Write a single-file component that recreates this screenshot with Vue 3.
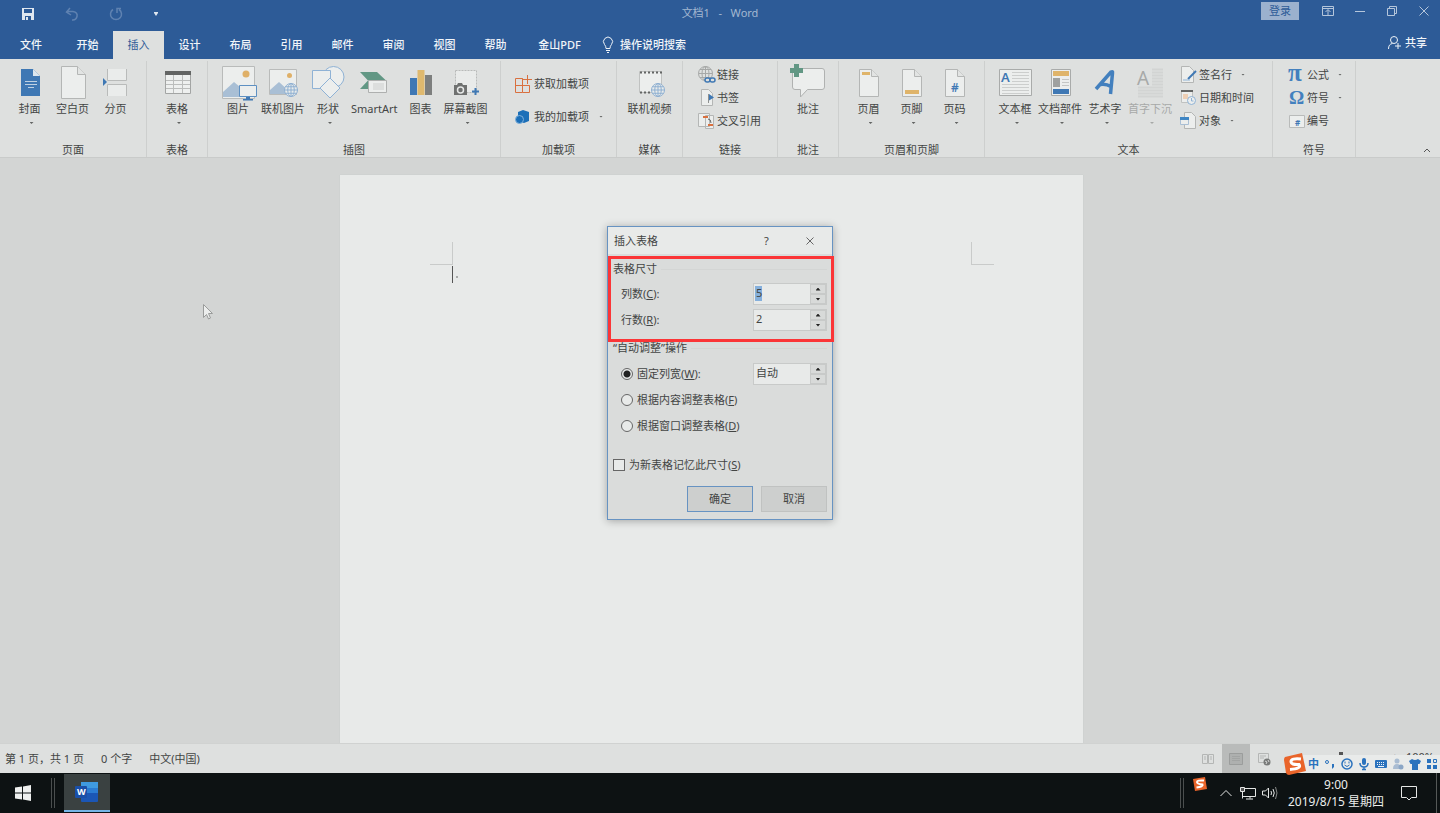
<script setup>
import { ref } from 'vue'

const tabs = ['开始', '插入', '设计', '布局', '引用', '邮件', '审阅', '视图', '帮助']
const activeTab = ref('插入')

const globe = (x, y, r) => {
  const h = r / 2
  return `<g fill="#e9eceb" stroke="#8fb0d2"><circle cx="${x}" cy="${y}" r="${r}"/><ellipse cx="${x}" cy="${y}" rx="${h}" ry="${r}" fill="none"/><path fill="none" d="M${x - r} ${y}h${2 * r}M${x} ${y - r}v${2 * r}M${x - r + 1} ${y - h}h${2 * r - 2}M${x - r + 1} ${y + h}h${2 * r - 2}"/></g>`
}
const sheet = '<path d="M12.500 4.500h12l7 7v20h-19z" fill="#eceeed" stroke="#b4b6b5"/><path d="M24.500 4.500v7h7" fill="#e2e4e3" stroke="#b4b6b5"/>'

const icons = {
  cover: '<path d="M13 4h12l7 7v20H13z" fill="#3f78b4"/><path d="M25 4v7h7z" fill="#dce6ee"/><path d="M17 16.500h12M17 19.500h12M20 22.500h6" stroke="#bfd1e3"/>',
  blank: '<path d="M10.500 1.500h16l8 8v24h-24z" fill="#eceeed" stroke="#b4b6b5"/><path d="M26.500 1.500v8h8" fill="#e2e4e3" stroke="#b4b6b5"/>',
  break: '<path d="M13.500 4v11.500h19V4M13.500 31V19.500h19V31" fill="#eaeceb" stroke="#b9bbba"/><path d="M9 13l4 4-4 4z" fill="#3f78b4"/>',
  table: '<path d="M10.500 6.500h25v22h-25z" fill="#eef0ef" stroke="#a3a5a4"/><path d="M10 6h26v4H10z" fill="#636564"/><path d="M18.500 10v18M27.500 10v18M11 15.500h24M11 19.500h24M11 23.500h24" stroke="#bbbdbc"/>',
  picture: '<path d="M6.500 1.500h32v32h-32z" fill="#eceeed" stroke="#b9bbba"/><circle cx="30" cy="9" r="3.500" fill="#dfb068"/><path d="M7 32V27l11-10 12 10v5z" fill="#a9bfd5"/><path d="M23.500 20.500h17v11h-17z" fill="#eceeed" stroke="#5e90c2"/><path d="M30 32h4v2h3v1.500H27V34h3z" fill="#3f78b4"/>',
  online: '<path d="M8.500 4.500h27v25h-27z" fill="#eceeed" stroke="#b9bbba"/><circle cx="28.500" cy="10.500" r="2.500" fill="#dfb068"/><path d="M9 29v-4l9-8 10 9v3z" fill="#a9bfd5"/>' + globe(30, 25, 6.5),
  shapes: '<g fill="#eceeed" stroke="#8fb2d5"><circle cx="27.500" cy="12" r="10.500"/><path d="M6.500 5.500h18v18h-18z"/><path d="M24 13l10 10-10 10-10-10z"/></g>',
  smart: '<path d="M8 7h17l9 8.500-9 8.500H8l8-8.500z" fill="#629784"/><path d="M16.500 15.500h18v12h-18z" fill="#eceeed" stroke="#aeb0af"/><path d="M21 18h11v7H21z" fill="#dcdedd"/>',
  chart: '<path d="M11 13h7v17h-7z" fill="#3f78b4"/><path d="M18.500 5h7v25h-7z" fill="#dfb96e"/><path d="M26 10h7v20h-7z" fill="#7d7f7e"/>',
  shot: '<path d="M11.500 5.500h21v22h-21z" fill="#e9ebea" stroke="#b8bab9" stroke-dasharray="2 1"/><path d="M10 20h3l1-2h4l1 2h4v10H10z" fill="#6f7170"/><circle cx="16.500" cy="25" r="3" fill="none" stroke="#e6e8e7" stroke-width="1.500"/><path d="M31.500 23v7M28 26.500h7" stroke="#3f78b4" stroke-width="2"/>',
  video: '<path d="M11.500 6.500h22v21h-22z" fill="#eceeed" stroke="#c0c2c1"/><path d="M12 7.500h22M12 27.500h12" stroke="#636564" stroke-width="2" stroke-dasharray="2 2"/>' + globe(30, 25, 6.5),
  comment: '<path d="M9 3.500h27q2.500 0 2.500 2.500v16q0 2.500-2.500 2.500H21.500L14.500 32v-7.500H9q-2.500 0-2.500-2.500V6q0-2.500 2.500-2.500z" fill="#eceeed" stroke="#b0b2b1"/><path d="M8-1h5v4h4v5h-4v4H8V8H4V3h4z" fill="#629784"/>',
  header: sheet + '<path d="M15 7h8v3h-8z" fill="#dfb46a"/>',
  footer: sheet + '<path d="M15 25h14v4H15z" fill="#dfb46a"/>',
  number: sheet + '<text x="18" y="27" font-size="12" font-weight="600" fill="#3f78b4">#</text>',
  textbox: '<path d="M6.500 4.500h32v26h-32z" fill="#eceeed" stroke="#a9abaa"/><text x="8" y="17" font-size="13" font-weight="600" fill="#3f78b4">A</text><path d="M19 7.500h17M19 10.500h17M19 13.500h17M19 16.500h17M9 19.500h27M9 22.500h27M9 25.500h27M9 28.500h27" stroke="#cccecd"/>',
  parts: '<path d="M13.500 4.500h19v26h-19z" fill="#eceeed" stroke="#a9abaa"/><path d="M15 6h16v5H15z" fill="#dfb46a"/><path d="M15 13h7v9h-7z" fill="#9fa1a0"/><path d="M24 14.500h7M24 17.500h7M24 20.500h7" stroke="#c4c6c5"/><path d="M15 24h16v5H15z" fill="#3f78b4"/>',
  art: '<path d="M13 24L28 7q2-1 1.500 1L27.500 29M17 19.500q6-1 11 2" fill="none" stroke="#4380be" stroke-width="3.500"/>',
  drop: '<text x="9" y="20" font-size="19" fill="#a7a9a8">A</text><path d="M24 4.500h11M24 7.500h11M24 10.500h11M24 13.500h11M24 16.500h11M24 19.500h11M10 22.500h25M10 25.500h25M10 28.500h25M10 31.500h25" stroke="#d2d4d3" stroke-width="2"/>',
  getaddin: '<path d="M1.500 3.500h7v14h-7zM1.500 10.500h14v7h-7M8.500 3.500v7h7" fill="none" stroke="#d9703f"/><path d="M13.500 0v9M9 4.500h9" stroke="#d9703f"/>',
  myaddin: '<path d="M9 2l6 2v9l-5 2-6-2V4z" fill="#1c6fb8"/><circle cx="5.500" cy="11.500" r="4" fill="#1c6fb8" stroke="#7db0dc"/>',
  link: '<g fill="none" stroke="#a6a8a7"><circle cx="7.500" cy="7.500" r="7"/><ellipse cx="7.500" cy="7.500" rx="3.500" ry="7"/><path d="M.5 7.500h14M7.500.5v14M2 3.500h11M2 11.500h11"/></g><g fill="#dee0df" stroke="#3f78b4" stroke-width="1.500"><rect x="7" y="12" width="5" height="4" rx="2"/><rect x="12" y="12" width="5" height="4" rx="2"/></g>',
  bookmark: '<path d="M3.500.5h7l4 4v12h-11z" fill="#eceeed" stroke="#b4b6b5"/><path d="M10.500 5v9" stroke="#8f9190"/><path d="M11 5l5 3.500-5 3z" fill="#3f78b4"/>',
  cross: '<path d="M.5 1.500h11v13H.5zM7.500 3.500h8v13h-8z" fill="#eceeed" stroke="#b4b6b5"/><path d="M5 5h5M10 13h5" stroke="#d9703f" stroke-width="2"/><path d="M10 7q3 0 3 4" fill="none" stroke="#636564"/>',
  sign: '<path d="M1.500.5h8l4 4v12h-12z" fill="#eceeed" stroke="#b4b6b5"/><path d="M16 5l-8 8" stroke="#3f78b4" stroke-width="2"/><path d="M3 14h7" stroke="#8fb3d6"/>',
  date: '<path d="M1.500 2.500h11v11h-11z" fill="#eceeed" stroke="#c0c2c1"/><path d="M1 1h12v2H1z" fill="#636564"/><path d="M3 5h5v5H3z" fill="#edcfb5"/><circle cx="11.500" cy="11.500" r="4" fill="#eceeed" stroke="#8fb3d6"/><path d="M11.500 9v3h2" fill="none" stroke="#8fb3d6"/>',
  object: '<path d="M4.500.5h7l4 4v12h-11z" fill="#eceeed" stroke="#b4b6b5"/><path d="M.5 5.500h8v7h-8z" fill="#eceeed" stroke="#a9bfd5"/><path d="M0 5h9v3H0z" fill="#3f86c4"/>',
  pi: '<text x="0" y="15" font-size="25" font-weight="700" font-family="Liberation Serif" fill="#4380be">π</text>',
  omega: '<text x="1" y="15" font-size="19" font-weight="700" font-family="Liberation Serif" fill="#4380be">Ω</text>',
  num: '<path d="M1.500 3.500h15v12h-15z" fill="#eceeed" stroke="#b9bbba"/><text x="7" y="14" font-size="8" font-weight="700" fill="#3f78b4">#</text>'
}

const groups = [
  { name: '页面', buttons: [['cover', '封面', 1], ['blank', '空白页'], ['break', '分页']] },
  { name: '表格', single: true, buttons: [['table', '表格', 1]] },
  { name: '插图', roomy: true, buttons: [['picture', '图片'], ['online', '联机图片'], ['shapes', '形状', 1], ['smart', 'SmartArt'], ['chart', '图表'], ['shot', '屏幕截图', 1]] },
  { name: '加载项', wide: true, rows: [['getaddin', '获取加载项'], ['myaddin', '我的加载项', 1]] },
  { name: '媒体', single: true, buttons: [['video', '联机视频']] },
  { name: '链接', rows: [['link', '链接'], ['bookmark', '书签'], ['cross', '交叉引用']] },
  { name: '批注', single: true, buttons: [['comment', '批注']] },
  { name: '页眉和页脚', buttons: [['header', '页眉', 1], ['footer', '页脚', 1], ['number', '页码', 1]] },
  { name: '文本', roomy: true, buttons: [['textbox', '文本框', 1], ['parts', '文档部件', 1], ['art', '艺术字', 1], ['drop', '首字下沉', 1, 1]], rows: [['sign', '签名行', 1], ['date', '日期和时间'], ['object', '对象', 1]] },
  { name: '符号', rows: [['pi', '公式', 1], ['omega', '符号', 1], ['num', '编号']] }
]

const columns = ref('5')
const rowCount = ref('2')
const colWidth = ref('自动')
const fit = ref('fixed')
const remember = ref(false)
</script>

<template>
  <div class="screen">
    <header class="titlebar">
      <div class="quick">
        <button aria-label="保存"><svg width="14" height="14"><path d="M1 1h12v12H1z" fill="#dfe7f0"/><path d="M3 2h8v4H3z" fill="#2d5b97"/><path d="M4 9h6v4H4z" fill="#2d5b97"/><path d="M5 10h2v3H5z" fill="#dfe7f0"/></svg></button>
        <button aria-label="撤消"><svg width="14" height="14"><path d="M5 1L1.500 5 6 8M2 4.500h6q5 1 4 5T7 13" fill="none" stroke="#5f82b1" stroke-width="1.500"/></svg></button>
        <button aria-label="重复"><svg width="14" height="14"><path d="M4 2.500a5.500 5.500 0 1 0 6 0M8 6V1.500H12" fill="none" stroke="#5f82b1" stroke-width="1.500"/></svg></button>
        <button class="more" aria-label="自定义快速访问工具栏"><svg width="6" height="6"><path d="M1 1h4v1L3 5 1 2z" fill="#dfe7f0"/></svg></button>
      </div>
      <h1 class="caption">文档1&nbsp; &nbsp;-&nbsp; &nbsp;Word</h1>
      <div class="window-tools">
        <button class="login">登录</button>
        <button aria-label="功能区显示选项"><svg width="14" height="14"><path d="M1.500 2.500h11v9h-11z" fill="none" stroke="#b5c6db"/><path d="M2 4.500h10M7 11V6M4.500 8L7 5.500 9.500 8" fill="none" stroke="#b5c6db"/></svg></button>
        <button aria-label="最小化"><svg width="14" height="14"><path d="M2 7.500h10" stroke="#b5c6db"/></svg></button>
        <button aria-label="还原"><svg width="14" height="14"><path d="M2.500 4.500h7v7h-7zM4.500 4V2.500h7v7H10" fill="none" stroke="#b5c6db"/></svg></button>
        <button aria-label="关闭"><svg width="14" height="14"><path d="M2.500 2.500l9 9M11.500 2.500l-9 9" stroke="#b5c6db"/></svg></button>
      </div>
    </header>

    <nav class="tabs">
      <button class="tab file">文件</button>
      <button v-for="t in tabs" :key="t" class="tab" :class="{ active: t === activeTab }" @click="activeTab = t">{{ t }}</button>
      <button class="tab pdf">金山PDF</button>
      <button class="tell"><svg width="14" height="18"><path d="M5 12.500Q5 10 3.500 8.500a4.500 4.500 0 1 1 7 0Q9 10 9 12.500zM5 14.500h4M6 16.500h2" fill="none" stroke="#eef3f8"/></svg>操作说明搜索</button>
      <button class="share"><svg width="14" height="16"><circle cx="7" cy="5" r="3.500" fill="none" stroke="#eef3f8"/><path d="M1.500 14q0-5 4-5.500M11 8v6M8 11h6" fill="none" stroke="#eef3f8"/></svg>共享</button>
    </nav>

    <section class="ribbon">
      <div v-for="g in groups" :key="g.name" class="group">
        <div class="tools" :class="{ single: g.single, roomy: g.roomy }">
          <button v-for="b in g.buttons" :key="b[1]" class="big" :class="{ dim: b[3] }">
            <svg class="big-icon" width="44" height="36" v-html="icons[b[0]]"></svg>
            <span>{{ b[1] }}</span>
            <i v-if="b[2]" class="caret"></i>
          </button>
          <div v-if="g.rows" class="stack" :class="{ wide: g.wide }">
            <button v-for="r in g.rows" :key="r[1]" class="small">
              <svg width="18" height="18" v-html="icons[r[0]]"></svg>
              <span>{{ r[1] }}</span>
              <i v-if="r[2]" class="caret"></i>
            </button>
          </div>
        </div>
        <div class="group-name">{{ g.name }}</div>
      </div>
      <button class="collapse" aria-label="折叠功能区"><svg width="8" height="6"><path d="M1 5l3-3 3 3" fill="none" stroke="#555"/></svg></button>
    </section>

    <main class="desk">
      <article class="page">
        <div class="marks"><i class="mark left"></i><i class="mark right"></i></div>
        <p class="line"><i class="beam"></i><i class="para"></i></p>
      </article>

      <svg class="pointer" width="12" height="18"><path d="M1.500 1.500v13l3-3 2 4.500 2-1-2-4.500h4z" fill="#eceeed" stroke="#9a9c9b"/></svg>

      <form class="dialog" role="dialog" aria-labelledby="dialog-title" @submit.prevent>
        <div class="dialog-head">
          <h2 id="dialog-title">插入表格</h2>
          <button type="button" class="head-btn">?</button>
          <button type="button" class="head-btn" aria-label="关闭"><svg width="10" height="10"><path d="M1.500 1.500l7 7M8.500 1.500l-7 7" stroke="#666"/></svg></button>
        </div>
        <div class="dialog-body">
          <div class="legend">表格尺寸</div>
          <div class="field">
            <label for="cols">列数(<u>C</u>):</label>
            <div class="spin"><input id="cols" v-model="columns" class="picked"><div class="steps"><button type="button" aria-label="增加列数"><i class="up"></i></button><button type="button" aria-label="减少列数"><i class="down"></i></button></div></div>
          </div>
          <div class="field">
            <label for="rows">行数(<u>R</u>):</label>
            <div class="spin"><input id="rows" v-model="rowCount"><div class="steps"><button type="button" aria-label="增加行数"><i class="up"></i></button><button type="button" aria-label="减少行数"><i class="down"></i></button></div></div>
          </div>
          <div class="legend second">“自动调整”操作</div>
          <div class="field">
            <label><input v-model="fit" type="radio" name="fit" value="fixed">固定列宽(<u>W</u>):</label>
            <div class="spin"><input v-model="colWidth" aria-label="列宽"><div class="steps"><button type="button" aria-label="增加列宽"><i class="up"></i></button><button type="button" aria-label="减少列宽"><i class="down"></i></button></div></div>
          </div>
          <div class="field"><label><input v-model="fit" type="radio" name="fit" value="content">根据内容调整表格(<u>F</u>)</label></div>
          <div class="field"><label><input v-model="fit" type="radio" name="fit" value="window">根据窗口调整表格(<u>D</u>)</label></div>
          <label class="remember"><input v-model="remember" type="checkbox">为新表格记忆此尺寸(<u>S</u>)</label>
          <div class="actions">
            <button class="primary">确定</button>
            <button type="button">取消</button>
          </div>
        </div>
        <div class="highlight"></div>
      </form>
    </main>

    <footer class="status">
      <span>第 1 页，共 1 页</span><span>0 个字</span><span>中文(中国)</span>
      <div class="views">
        <button aria-label="阅读视图"><svg width="14" height="12"><path d="M1.500 1.500h5v9h-5zM7.500 1.500h5v9h-5zM3 4h2M3 6h2M9 4h2M9 6h2" fill="none" stroke="#b4b6b5"/></svg></button>
        <button class="on" aria-label="页面视图"><svg width="14" height="12"><path d="M.5.5h13v11H.5z" fill="#aeb0af" stroke="#9b9d9c"/><path d="M3 3.500h8M3 5.500h8M3 7.500h8" stroke="#a2a4a3"/></svg></button>
        <button aria-label="Web 版式视图"><svg width="14" height="14"><path d="M1.500 1.500h10v9h-10zM3 4h6M3 6h4" fill="none" stroke="#b4b6b5"/><circle cx="10" cy="10" r="3.500" fill="#777978"/><path d="M8 9l2 1-1 2M11 8l1 2" stroke="#d5d7d6" fill="none"/></svg></button>
      </div>
      <div class="zoom"><input type="range" aria-label="缩放" min="0" max="100" value="50"><span>+</span><span class="percent">100%</span></div>
      <div class="ime">
        <svg class="ime-logo" width="24" height="24"><path d="M2 5l17-4 4 18-17 4q-2 0-3-2L1 8q0-2 1-3z" fill="#e9642a"/><path d="M18 7Q8 6 8 9.500t8 3q3 4-9 5" fill="none" stroke="#fff" stroke-width="3"/></svg>
        <button>中</button>
        <button aria-label="标点"><svg width="12" height="12"><circle cx="3" cy="4" r="1.500" fill="none" stroke="#2a72bd"/><path d="M8 6h2v3l-2 2z" fill="#2a72bd"/></svg></button>
        <button aria-label="表情"><svg width="12" height="12"><circle cx="6" cy="6" r="5" fill="none" stroke="#2a72bd" stroke-width="1.500"/><path d="M4 3.500v2M8 3.500v2M3.500 7q2.500 3 5 0" fill="none" stroke="#2a72bd"/></svg></button>
        <button aria-label="语音"><svg width="12" height="12"><rect x="4" y="0" width="4" height="7" rx="2" fill="#2a72bd"/><path d="M2 5q0 4 4 4t4-4M6 9v2M4 11.500h4" fill="none" stroke="#2a72bd" stroke-width="1.500"/></svg></button>
        <button aria-label="软键盘"><svg width="12" height="12"><rect x="0" y="2" width="12" height="8" rx="1" fill="#2a72bd"/><path d="M2 4.500h8M2 6.500h8" stroke="#eef3f8" stroke-dasharray="1 1"/><path d="M3 8.500h6" stroke="#eef3f8"/></svg></button>
        <button aria-label="账户"><svg width="12" height="12"><circle cx="5" cy="3" r="2.500" fill="#a9bcd2"/><path d="M1 11q0-5 4-5t4 5z" fill="#a9bcd2"/><circle cx="9" cy="9" r="2.500" fill="#8ba6c6"/></svg></button>
        <button aria-label="皮肤"><svg width="12" height="12"><path d="M3 1q3 2 6 0l3 2-1.500 3H9v6H3V6H1.500L0 3z" fill="#2a72bd"/></svg></button>
        <button aria-label="工具箱"><svg width="12" height="12"><path d="M1 1h4v4H1zM1 7h4v4H1zM7 7h4v4H7z" fill="#2a72bd"/><path d="M7.500 1.500h3v3h-3z" fill="none" stroke="#2a72bd"/></svg></button>
      </div>
    </footer>

    <div class="taskbar">
      <button class="start" aria-label="开始"><svg width="16" height="16"><path d="M0 2.500l7-1v6H0zM8 1.500L16 0v7.500H8zM0 8.500h7v6l-7-1zM8 8.500h8V16l-8-1.500z" fill="#eef0ef"/></svg></button>
      <i class="grip"></i>
      <button class="app" aria-label="Word"><svg width="24" height="22"><rect x="6" y="1" width="17" height="20" rx="1" fill="#1b56b5"/><path d="M6 1h17v6H6z" fill="#3f9ae0"/><path d="M6 7h17v5H6z" fill="#2b7cd3"/><rect x="0" y="5" width="12" height="12" rx="1" fill="#1a4fa8"/><text x="2" y="14" font-size="9" font-weight="700" fill="#fff">W</text></svg></button>
      <i class="grip tray-grip"></i>
      <svg class="tray-ime" width="16" height="16"><path d="M1 3l12-2 2 12-12 2z" fill="#e9642a"/><path d="M12 4.500Q5 4 5 6t5.500 2.500q1 2-6 3" fill="none" stroke="#fff" stroke-width="2"/></svg>
      <button class="tray" aria-label="显示隐藏的图标"><svg width="14" height="8"><path d="M1.500 7L7 1.500 12.500 7" fill="none" stroke="#e4e6e5"/></svg></button>
      <button class="tray" aria-label="网络"><svg width="18" height="14"><path d="M6 2.500h10.500v8H4M3.500 6v6.500M7 13h7M11 10.500v2" fill="none" stroke="#e4e6e5"/><path d="M1.500 1.500h4v4h-4z" fill="#555" stroke="#e4e6e5"/></svg></button>
      <button class="tray" aria-label="音量"><svg width="18" height="14"><path d="M1.500 5h3l3-3v10l-3-3h-3zM10 5q1 2 0 4M12 3q2.500 4 0 8" fill="none" stroke="#e4e6e5"/><path d="M14.500 1q3 6 0 12" fill="none" stroke="#888a89"/></svg></button>
      <button class="clock"><span>9:00</span><span>2019/8/15 星期四</span></button>
      <button class="notice" aria-label="通知"><svg width="16" height="16"><path d="M.5 1.500h15v11h-5L8 15l-2.500-2.500h-5z" fill="none" stroke="#e4e6e5"/></svg></button>
      <i class="edge"></i>
    </div>
  </div>
</template>

<style>
body { margin: 0; }
</style>

<style scoped>
* { box-sizing: border-box; }
.screen {
  display: flex;
  flex-direction: column;
  min-height: 100vh;
  overflow: hidden;
  font: 11px/16px "Noto Sans", "Noto Sans CJK SC", sans-serif;
  color: #434544;
  background: #d3d5d4;
}
button {
  border: 0;
  padding: 0;
  margin: 0;
  background: none;
  color: inherit;
  font: inherit;
  white-space: nowrap;
}
svg { display: block; flex: none; overflow: visible; }
h1, h2, p { margin: 0; font: inherit; }

.titlebar {
  display: grid;
  grid-template-columns: 1fr auto 1fr;
  height: 31px;
  background: #2d5b97;
  color: #a3b8d1;
}
.quick { display: flex; align-items: center; padding: 0 0 4px 6px; }
.quick button { display: flex; justify-content: center; width: 44px; }
.quick .more { width: 36px; }
.caption { padding-top: 5px; }
.window-tools { display: flex; justify-content: flex-end; align-items: flex-start; }
.window-tools button { display: flex; justify-content: center; align-items: center; width: 32px; height: 22px; }
.window-tools .login { width: 38px; height: 18px; margin: 2px 13px 0 0; background: #9bb1ce; color: #2d5b97; }

.tabs { display: flex; height: 28px; background: #2d5b97; color: #f1f5f9; font-weight: 500; }
.tab { width: 51px; }
.tab.file { width: 62px; }
.tab.pdf { width: 77px; }
.tab.active { background: #dee0df; color: #2d5b97; font-weight: 400; }
.tell, .share { display: flex; align-items: center; gap: 5px; }
.tell { margin-left: 3px; }
.share { margin-left: auto; padding: 0 13px 4px 0; gap: 4px; }

.ribbon {
  display: grid;
  grid-template-columns: 147px 61px 293px 116px 66px 95px 61px 146px 288px 83px 1fr;
  height: 99px;
  background: #dee0df;
  border-bottom: 1px solid #c9cbca;
}
.group { display: flex; flex-direction: column; border-right: 1px solid #cdcfce; margin-top: 2px; }
.tools { flex: 1; display: flex; padding: 4px 0 0 8px; }
.tools.single { justify-content: center; padding-left: 0; }
.big { display: flex; flex-direction: column; align-items: center; flex: none; min-width: 43px; padding: 0 1px; }
.roomy .big { min-width: 44px; }
.big.dim { color: #a7a9a8; }
.big-icon { margin: 0 -2px; }
.caret { width: 4px; height: 2px; margin: 5px 0 0 4px; background: #626463; clip-path: polygon(0 0, 100% 0, 50% 100%); }
.dim .caret { background: #a7a9a8; }
.stack { display: flex; flex-direction: column; margin-top: -2px; padding-left: 7px; }
.small { display: flex; align-items: center; gap: 1px; height: 23px; }
.small .caret { margin: 0 0 0 8px; }
.wide { padding: 4px 0 0 5px; }
.wide .small { height: 33px; gap: 2px; }
.group-name { text-align: center; line-height: 14px; }
.collapse { justify-self: end; align-self: end; margin: 0 9px 4px 0; }

.desk { position: relative; flex: 1; display: flex; justify-content: center; padding: 17px 17px 0 0; }
.page { width: 743px; padding: 67px 89px 0 90px; background: #e8eae9; box-shadow: 0 0 1px #bfc1c0; }
.marks { display: flex; justify-content: space-between; }
.mark { width: 23px; height: 23px; border: 0 solid #c9cbca; }
.mark.left { border-width: 0 1px 1px 0; }
.mark.right { border-width: 0 0 1px 1px; }
.line { display: flex; align-items: center; gap: 3px; padding: 1px 0 0 22px; }
.beam { width: 1px; height: 17px; background: #555; }
.para { width: 2px; height: 2px; margin-top: 4px; background: #a9abaa; }
.pointer { position: absolute; left: 202px; top: 145px; }

.dialog {
  position: absolute;
  top: 68px;
  left: 50%;
  width: 226px;
  transform: translateX(-50%);
  border: 1px solid #6793c2;
  background: #dadcdb;
  box-shadow: 0 1px 8px rgba(0, 0, 0, 0.3);
}
.dialog-head { display: flex; align-items: center; height: 27px; padding-left: 6px; background: #e8eae9; }
.dialog-head h2 { flex: 1; }
.head-btn { display: flex; justify-content: center; width: 43px; }
.head-btn:last-child { margin-right: 1px; }
.dialog-body { padding: 6px 5px 7px; }
.legend { display: flex; align-items: center; gap: 4px; height: 18px; margin-bottom: 3px; }
.legend::after { content: ""; flex: 1; border-top: 1px solid #d3d5d4; }
.legend.second { margin: 6px 0 4px; }
.field { display: flex; align-items: center; justify-content: space-between; height: 26px; padding-left: 8px; }
.field label, .remember { display: flex; align-items: center; }
.spin { display: flex; width: 74px; height: 22px; border: 1px solid #c8cac9; background: #e8eae9; }
.spin input { flex: 1; width: 0; min-width: 0; border: 0; padding: 0 0 2px 2px; background: none; color: inherit; font: inherit; }
.spin .picked { background: linear-gradient(#85b0dc, #85b0dc) 1px 2px / 7px 15px no-repeat; }
.steps { display: flex; flex-direction: column; width: 16px; }
.steps button { flex: 1; display: flex; align-items: center; justify-content: center; background: #d8dad9; border: 1px solid #c8cac9; }
.up, .down { width: 5px; height: 3px; background: #222; clip-path: polygon(50% 0, 100% 100%, 0 100%); }
.down { clip-path: polygon(0 0, 100% 0, 50% 100%); }
input[type="radio"], input[type="checkbox"] { appearance: none; width: 12px; height: 12px; margin: 0 4px 0 0; border: 1px solid #666; background: #e8eae9; }
input[type="radio"] { border-radius: 50%; }
input[type="radio"]:checked { background: radial-gradient(circle, #222 3px, #e8eae9 4px); }
.remember { height: 26px; margin-top: 13px; }
.actions { display: flex; justify-content: flex-end; gap: 8px; margin-top: 8px; }
.actions button { width: 66px; height: 26px; background: #cdcfce; border: 1px solid #c0c2c1; }
.actions .primary { border-color: #6793c2; }
.highlight { position: absolute; top: 29px; left: 0; right: -2px; height: 86px; border: 3px solid #fb3537; pointer-events: none; }

.status { position: relative; display: flex; align-items: center; gap: 17px; height: 30px; padding-left: 5px; background: #dee0df; border-top: 1px solid #d0d2d1; }
.views { display: flex; align-self: stretch; margin-left: auto; }
.views button { display: flex; align-items: center; justify-content: center; width: 28px; }
.views .on { background: #b9bbba; }
.zoom { display: flex; align-items: center; gap: 4px; width: 139px; margin-right: 6px; padding-bottom: 4px; }
.zoom input { appearance: none; flex: 1; min-width: 0; height: 10px; margin: 0; background: linear-gradient(#999, #999) center / 100% 1px no-repeat; }
.zoom input::-webkit-slider-thumb { appearance: none; width: 4px; height: 10px; background: #555; }
.percent { margin-left: 4px; }
.ime { position: absolute; right: 0; bottom: 0; display: flex; align-items: center; width: 140px; height: 18px; padding-left: 7px; background: #e9ebea; color: #2a72bd; font-weight: 700; }
.ime-logo { margin: 0 -2px 0 -24px; }
.ime button { flex: 1; display: flex; justify-content: center; }

.taskbar { display: flex; align-items: center; height: 40px; background: #0d1213; color: #eceeed; }
.start { display: flex; justify-content: center; width: 46px; margin-right: 5px; }
.grip { width: 4px; height: 30px; border: 1px solid #4b4f4f; border-width: 0 1px; }
.app { display: flex; align-items: center; justify-content: center; width: 46px; height: 38px; margin-left: 9px; background: #3a4141; border-bottom: 2px solid #76b5e6; }
.tray-grip { margin-left: auto; }
.tray-ime { margin: 0 7px 18px 8px; }
.tray { display: flex; justify-content: center; width: 22px; }
.clock { display: flex; flex-direction: column; align-items: center; width: 110px; font-size: 12px; line-height: 17px; }
.notice { display: flex; justify-content: center; width: 36px; }
.edge { width: 1px; height: 40px; margin: 0 3px 0 9px; background: #555958; }
</style>
